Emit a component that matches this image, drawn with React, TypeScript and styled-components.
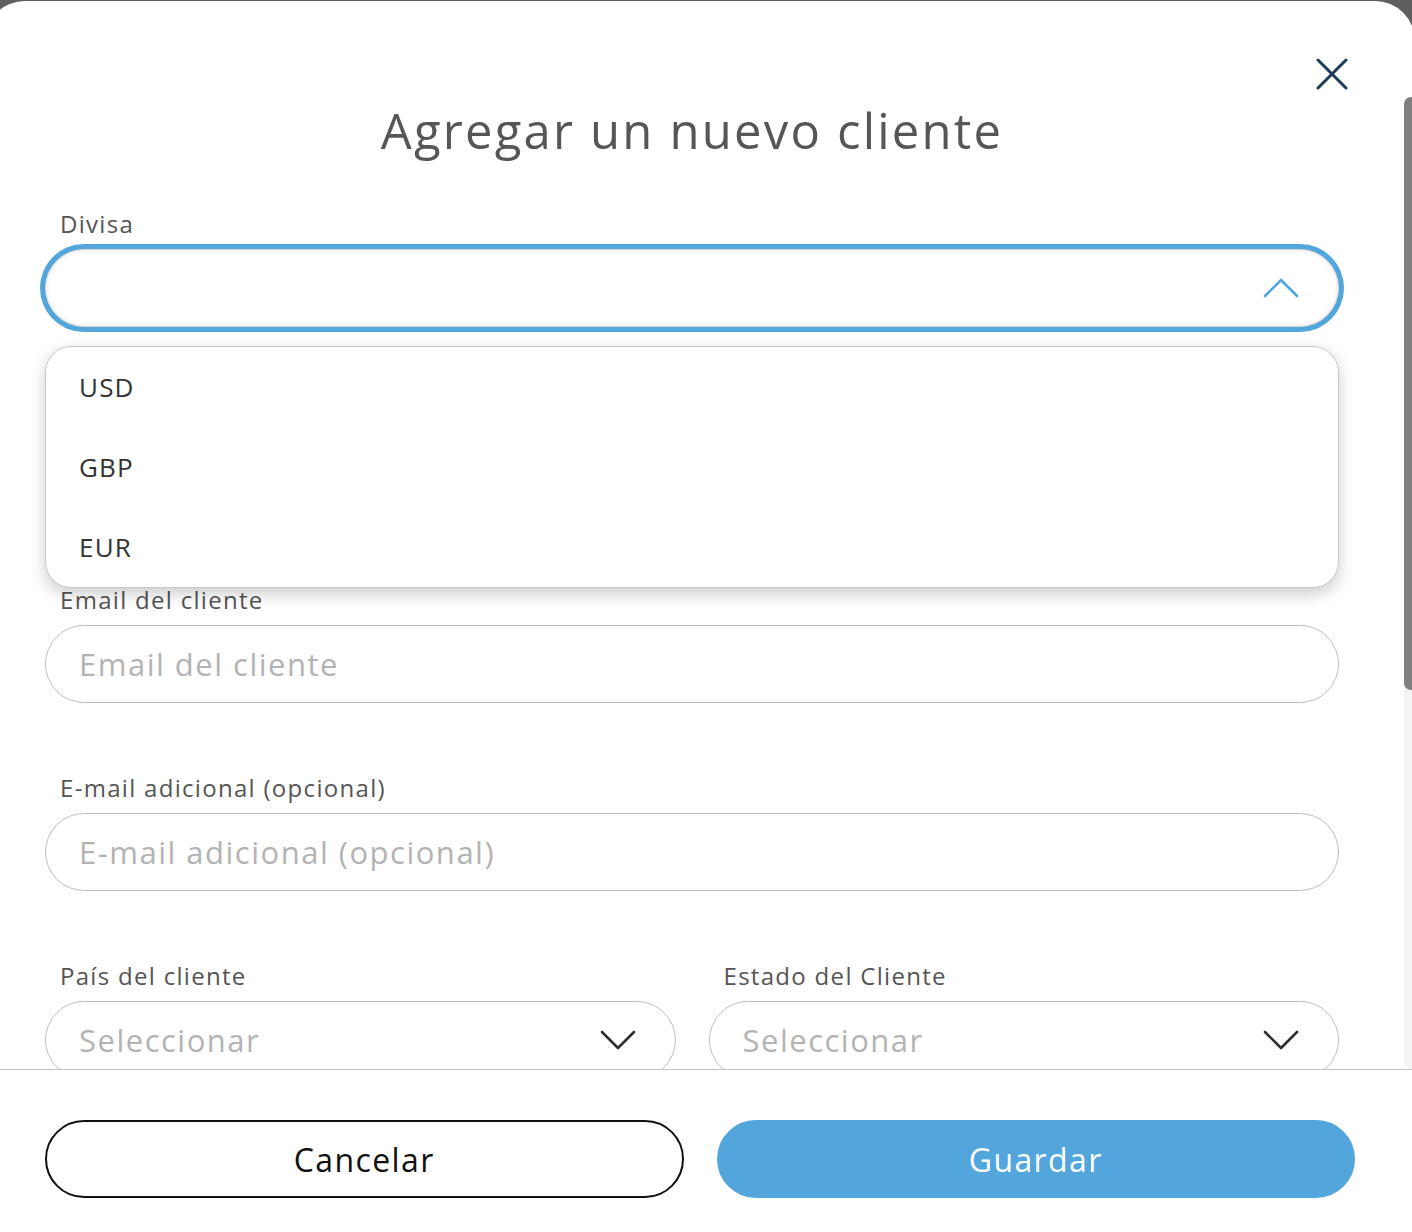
import React, { FC } from 'react';
import styled, { createGlobalStyle } from 'styled-components';

const GlobalStyle = createGlobalStyle`
  html, body {
    margin: 0;
    padding: 0;
    height: 100%;
    overflow: hidden;
    background: #5f5f5f;
  }
  * {
    box-sizing: border-box;
  }
  #root {
    height: 100%;
  }
`;

const font = `'Open Sans', 'Noto Sans', sans-serif`;

const StyledModal = styled.div`
  display: flex;
  flex-direction: column;
  height: calc(100% - 1px);
  margin: 1px -3px 0 -15px;
  background: #fff;
  border-radius: 40px 40px 0 0;
  font-family: ${font};
`;

const StyledHeader = styled.header`
  display: flex;
  justify-content: flex-end;
  height: 96px;
  flex-shrink: 0;
  padding: 57px 67px 0 0;
`;

const CloseButton = styled.button`
  width: 32px;
  height: 32px;
  padding: 0;
  border: none;
  background: none;
  cursor: pointer;
  color: #1b3a5a;
`;

const ScrollArea = styled.div`
  display: flex;
  flex: 1;
  min-height: 0;
`;

const ScrollContent = styled.div`
  flex: 1;
  min-width: 0;
  overflow: hidden;
  padding: 0 65px 120px 60px;
`;

const ScrollTrack = styled.div`
  flex-shrink: 0;
  width: 11px;
  background: #f4f4f4;
  border-radius: 7px 0 0 7px;
`;

const ScrollThumb = styled.div`
  height: 593px;
  background: #7f7f7f;
  border-radius: 7px 0 0 7px;
`;

const Title = styled.h1`
  margin: 0 0 46px;
  font-size: 49px;
  line-height: 66px;
  font-weight: 400;
  letter-spacing: 2.2px;
  color: #565656;
  text-align: center;
`;

const Form = styled.form`
  display: flex;
  flex-direction: column;
  gap: 70px;
`;

const Row = styled.div`
  display: grid;
  grid-template-columns: 1fr 1fr;
  gap: 33px;
`;

// $covered: field that sits under the open currency menu
const Field = styled.div<{ $covered?: boolean }>`
  display: flex;
  flex-direction: column;
  gap: 11px;
  visibility: ${({ $covered }) => ($covered ? 'hidden' : 'visible')};
`;

const Label = styled.label`
  padding-left: 15px;
  font-size: 24px;
  line-height: 29px;
  color: #555;
  letter-spacing: 1.3px;
`;

const Input = styled.input`
  width: 100%;
  height: 78px;
  padding: 0 33px;
  border: 1px solid #bdbdbd;
  border-radius: 39px;
  font-family: ${font};
  font-size: 31px;
  letter-spacing: 1.5px;
  color: #333;
  outline: none;
  background: #fff;

  &::placeholder {
    color: #b3b3b3;
  }
`;

const SelectWrap = styled.div`
  position: relative;
  visibility: visible;
`;

const SelectBox = styled.div<{ $open?: boolean }>`
  display: flex;
  align-items: center;
  justify-content: space-between;
  height: 78px;
  padding: 0 39px 0 33px;
  border: 1px solid ${({ $open }) => ($open ? '#d9d9d9' : '#bdbdbd')};
  border-radius: 39px;
  background: #fff;
  font-size: 31px;
  letter-spacing: 1.5px;
  color: #b3b3b3;
  box-shadow: ${({ $open }) =>
    $open ? '0 0 0 5px #52a6db, inset 0 0 4px rgba(0, 0, 0, 0.12)' : 'none'};
`;

const Chevron = styled.svg<{ $open?: boolean }>`
  width: 36px;
  height: 22px;
  color: ${({ $open }) => ($open ? '#52a6db' : '#2e2e2e')};
`;

const Menu = styled.ul`
  position: absolute;
  top: calc(100% + 19px);
  left: 0;
  right: 0;
  z-index: 5;
  margin: 0;
  padding: 0;
  list-style: none;
  background: #fff;
  border: 1px solid #c9c9c9;
  border-radius: 26px;
  box-shadow: 0 6px 16px rgba(0, 0, 0, 0.2);
  overflow: hidden;
`;

const MenuItem = styled.li`
  display: flex;
  align-items: center;
  height: 80px;
  padding-left: 33px;
  font-size: 26px;
  color: #333;
  letter-spacing: 1.2px;
`;

const StyledFooter = styled.footer`
  display: grid;
  grid-template-columns: 1fr 1fr;
  gap: 33px;
  flex-shrink: 0;
  height: 163px;
  padding: 50px 60px 0;
  border-top: 1px solid #c4c4c4;
`;

const Button = styled.button<{ $primary?: boolean }>`
  height: 78px;
  border-radius: 39px;
  border: ${({ $primary }) => ($primary ? '2px solid #52a6db' : '2px solid #111')};
  background: ${({ $primary }) => ($primary ? '#52a6db' : '#fff')};
  color: ${({ $primary }) => ($primary ? '#fff' : '#111')};
  font-family: ${font};
  font-size: 32px;
  letter-spacing: 1.4px;
  cursor: pointer;
`;

const ChevronIcon: FC<{ open?: boolean }> = ({ open }) => (
  <Chevron $open={open} viewBox="0 0 36 22" fill="none">
    <polyline
      points={open ? '2,19 18,3 34,19' : '2,3 18,19 34,3'}
      stroke="currentColor"
      strokeWidth="2.6"
      strokeLinecap="round"
      strokeLinejoin="round"
    />
  </Chevron>
);

const Select: FC<{ placeholder?: string; open?: boolean; options?: string[] }> = ({
  placeholder,
  open,
  options,
}) => (
  <SelectWrap>
    <SelectBox $open={open}>
      <span>{placeholder}</span>
      <ChevronIcon open={open} />
    </SelectBox>
    {open && options && (
      <Menu>
        {options.map((option) => (
          <MenuItem key={option}>{option}</MenuItem>
        ))}
      </Menu>
    )}
  </SelectWrap>
);

const App: FC = () => {
  return (
    <>
      <GlobalStyle />
      <StyledModal>
        <StyledHeader>
          <CloseButton aria-label="Cerrar">
            <svg width="32" height="32" viewBox="0 0 32 32" fill="none">
              <path
                d="M2 2 30 30M30 2 2 30"
                stroke="currentColor"
                strokeWidth="3"
                strokeLinecap="round"
              />
            </svg>
          </CloseButton>
        </StyledHeader>
        <ScrollArea>
          <ScrollContent>
            <Title>Agregar un nuevo cliente</Title>
            <Form>
              <Field>
                <Label>Divisa</Label>
                <Select open options={['USD', 'GBP', 'EUR']} />
              </Field>
              <Field $covered>
                <Label>Nombre del cliente</Label>
                <Input placeholder="Nombre del cliente" />
              </Field>
              <Field>
                <Label>Email del cliente</Label>
                <Input placeholder="Email del cliente" />
              </Field>
              <Field>
                <Label>E-mail adicional (opcional)</Label>
                <Input placeholder="E-mail adicional (opcional)" />
              </Field>
              <Row>
                <Field>
                  <Label>País del cliente</Label>
                  <Select placeholder="Seleccionar" />
                </Field>
                <Field>
                  <Label>Estado del Cliente</Label>
                  <Select placeholder="Seleccionar" />
                </Field>
              </Row>
            </Form>
          </ScrollContent>
          <ScrollTrack>
            <ScrollThumb />
          </ScrollTrack>
        </ScrollArea>
        <StyledFooter>
          <Button type="button">Cancelar</Button>
          <Button type="button" $primary>
            Guardar
          </Button>
        </StyledFooter>
      </StyledModal>
    </>
  );
};

export default App;
